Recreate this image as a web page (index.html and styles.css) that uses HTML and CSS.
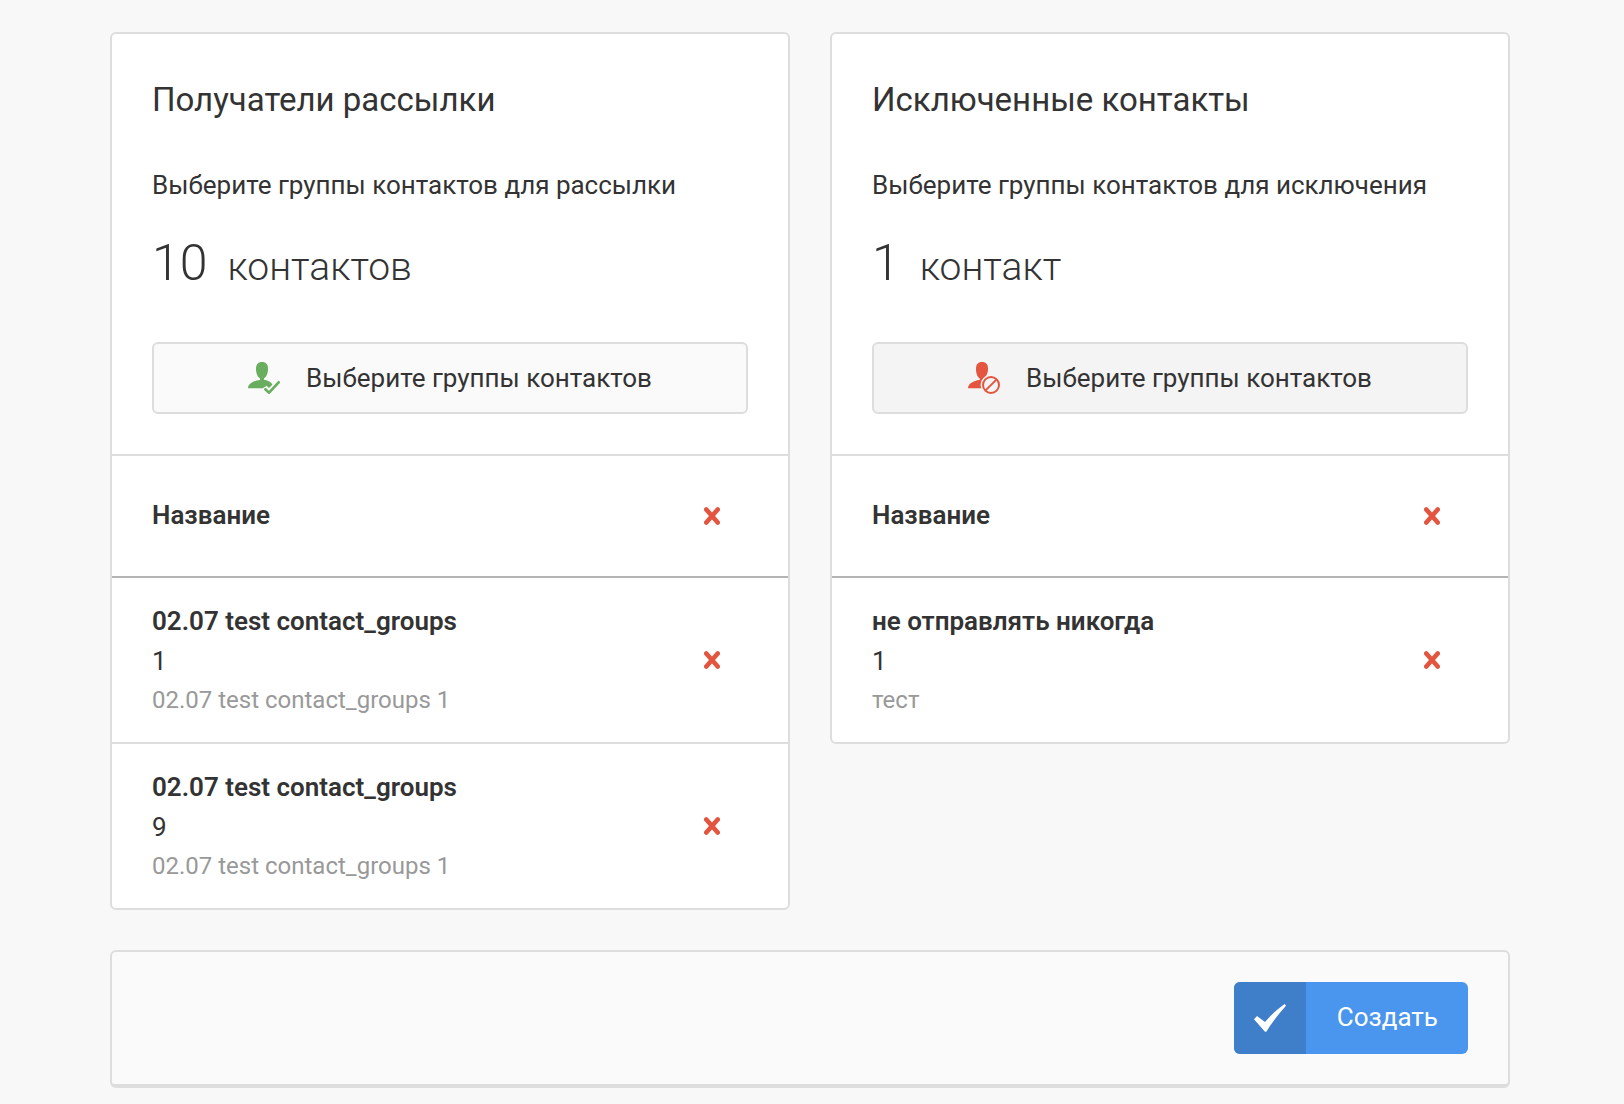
FILE: index.html
```html
<!DOCTYPE html>
<html lang="ru">
<head>
<meta charset="utf-8">
<meta name="viewport" content="width=device-width, initial-scale=1">
<title>Получатели рассылки</title>
<link rel="stylesheet" href="styles.css">
</head>
<body>
<svg class="sprite" aria-hidden="true">
  <symbol id="cross" viewBox="0 0 16 18">
    <path d="M2.3 2.5 13.7 15.5M13.7 2.5 2.3 15.5" fill="none" stroke="currentColor" stroke-width="4.6" stroke-linecap="round"/>
  </symbol>
  <symbol id="user-check" viewBox="0 0 96 96">
    <path d="M42 0C54 0 60 7 60 20C60 34 55 45 48 49V53C60 55 71 60 73 68L63 78L56 71L44 79H0C0 65 16 56 36 54V49C29 45 24 34 24 20C24 7 30 0 42 0Z" fill="currentColor"/>
    <path d="M51 81 63 92 93 60" fill="none" stroke="#fafafa" stroke-width="14"/>
    <path d="M52 82 63 92 92 61" fill="none" stroke="currentColor" stroke-width="8" stroke-linecap="round"/>
  </symbol>
  <symbol id="user-block" viewBox="0 0 96 96">
    <path d="M42 0C54 0 60 7 60 20C60 29 58 36 54 42C44 48 37 59 38 72L40 79H0C0 65 16 56 35 54V49C28 45 24 34 24 20C24 7 30 0 42 0Z" fill="currentColor"/>
    <circle cx="69" cy="69" r="24" fill="none" stroke="currentColor" stroke-width="6"/>
    <path d="M52 86 86 52" stroke="currentColor" stroke-width="6"/>
  </symbol>
  <symbol id="check" viewBox="0 0 96 84">
    <path d="M0 46 9 36 33 54C50 34 69 16 92 0L96 5C75 28 55 54 37 83H33Z" fill="currentColor"/>
  </symbol>
</svg>
<main class="page">
  <div class="columns">
    <section class="card">
      <div class="card-head">
        <h2 class="title">Получатели рассылки</h2>
        <p class="hint">Выберите группы контактов для рассылки</p>
        <p class="count"><span class="count-number">10</span><span class="count-unit">контактов</span></p>
        <button type="button" class="pick"><svg class="pick-icon pick-icon-add" aria-hidden="true"><use href="#user-check"/></svg>Выберите группы контактов</button>
      </div>
      <table class="groups">
        <thead>
          <tr><th scope="col">Название</th><td class="action"><button type="button" class="remove" aria-label="Удалить все"><svg aria-hidden="true"><use href="#cross"/></svg></button></td></tr>
        </thead>
        <tbody>
          <tr>
            <td><div class="name">02.07 test contact_groups</div><div>1</div><div class="note">02.07 test contact_groups 1</div></td>
            <td class="action"><button type="button" class="remove" aria-label="Удалить"><svg aria-hidden="true"><use href="#cross"/></svg></button></td>
          </tr>
          <tr>
            <td><div class="name">02.07 test contact_groups</div><div>9</div><div class="note">02.07 test contact_groups 1</div></td>
            <td class="action"><button type="button" class="remove" aria-label="Удалить"><svg aria-hidden="true"><use href="#cross"/></svg></button></td>
          </tr>
        </tbody>
      </table>
    </section>
    <section class="card">
      <div class="card-head">
        <h2 class="title">Исключенные контакты</h2>
        <p class="hint">Выберите группы контактов для исключения</p>
        <p class="count"><span class="count-number">1</span><span class="count-unit">контакт</span></p>
        <button type="button" class="pick pick-active"><svg class="pick-icon pick-icon-block" aria-hidden="true"><use href="#user-block"/></svg>Выберите группы контактов</button>
      </div>
      <table class="groups">
        <thead>
          <tr><th scope="col">Название</th><td class="action"><button type="button" class="remove" aria-label="Удалить все"><svg aria-hidden="true"><use href="#cross"/></svg></button></td></tr>
        </thead>
        <tbody>
          <tr>
            <td><div class="name">не отправлять никогда</div><div>1</div><div class="note">тест</div></td>
            <td class="action"><button type="button" class="remove" aria-label="Удалить"><svg aria-hidden="true"><use href="#cross"/></svg></button></td>
          </tr>
        </tbody>
      </table>
    </section>
  </div>
  <footer class="actions">
    <button type="submit" class="create"><span class="create-icon"><svg aria-hidden="true"><use href="#check"/></svg></span><span class="create-label">Создать</span></button>
  </footer>
</main>
</body>
</html>
```
FILE: styles.css
```css
* {
  box-sizing: border-box;
}

body {
  margin: 0;
  background: #f8f8f8;
  color: #333;
  font: 26px/40px Roboto, "Liberation Sans", sans-serif;
}

button {
  font: inherit;
  color: inherit;
  cursor: pointer;
}

.sprite {
  display: none;
}

.page {
  padding: 32px 114px 16px 110px;
}

.columns {
  display: grid;
  grid-template-columns: 1fr 1fr;
  gap: 40px;
  align-items: start;
}

.card {
  background: #fff;
  border: 2px solid #ddd;
  border-radius: 6px;
}

.card-head {
  padding: 40px;
  border-bottom: 2px solid #ddd;
}

.title {
  margin: 0;
  font-size: 33px;
  line-height: 52px;
  font-weight: 400;
}

.hint {
  margin: 39px 0 0;
}

.count {
  display: flex;
  align-items: baseline;
  gap: 20px;
  margin: 26px 0 0;
  font-weight: 300;
  line-height: 64px;
}

.count-number {
  font-size: 50px;
}

.count-unit {
  font-size: 39px;
}

.pick {
  display: flex;
  align-items: center;
  justify-content: center;
  gap: 26px;
  width: 100%;
  height: 72px;
  margin: 43px 0 0;
  padding: 0;
  background: #fafafa;
  border: 2px solid #ddd;
  border-radius: 6px;
}

.pick-active {
  background: #f4f4f4;
}

.pick-icon {
  width: 32px;
  height: 32px;
}

.pick-icon-add {
  color: #69ae5e;
}

.pick-icon-block {
  color: #e3553f;
}

.groups {
  width: 100%;
  border-spacing: 0;
}

.groups th,
.groups td {
  padding: 23px 0 23px 40px;
  text-align: left;
  vertical-align: middle;
}

.groups thead th,
.groups thead td {
  height: 122px;
  padding-top: 0;
  padding-bottom: 0;
  border-bottom: 2px solid #b4b4b4;
}

.groups thead th {
  padding-bottom: 2px;
}

.groups tbody tr + tr td {
  border-top: 2px solid #ddd;
}

.groups th,
.name {
  font-weight: 600;
}

.note {
  color: #999;
  font-size: 24px;
  line-height: 38px;
}

.groups .action {
  width: 124px;
  padding-right: 68px;
}

.remove {
  display: block;
  padding: 0;
  border: 0;
  background: none;
  color: #e3553f;
}

.remove svg {
  display: block;
  width: 16px;
  height: 18px;
}

.actions {
  display: flex;
  justify-content: flex-end;
  margin-top: 40px;
  padding: 30px 40px;
  background: #fafafa;
  border: 2px solid #ddd;
  border-bottom-width: 4px;
  border-radius: 6px;
}

.create {
  display: flex;
  height: 72px;
  padding: 0;
  overflow: hidden;
  border: 0;
  border-radius: 6px;
  background: #4a95ee;
  color: #fff;
}

.create-icon {
  display: flex;
  align-items: center;
  justify-content: center;
  width: 72px;
  height: 72px;
  background: #3f7fca;
}

.create-icon svg {
  width: 32px;
  height: 28px;
}

.create-label {
  padding: 0 30px 0 31px;
  line-height: 70px;
}
```
